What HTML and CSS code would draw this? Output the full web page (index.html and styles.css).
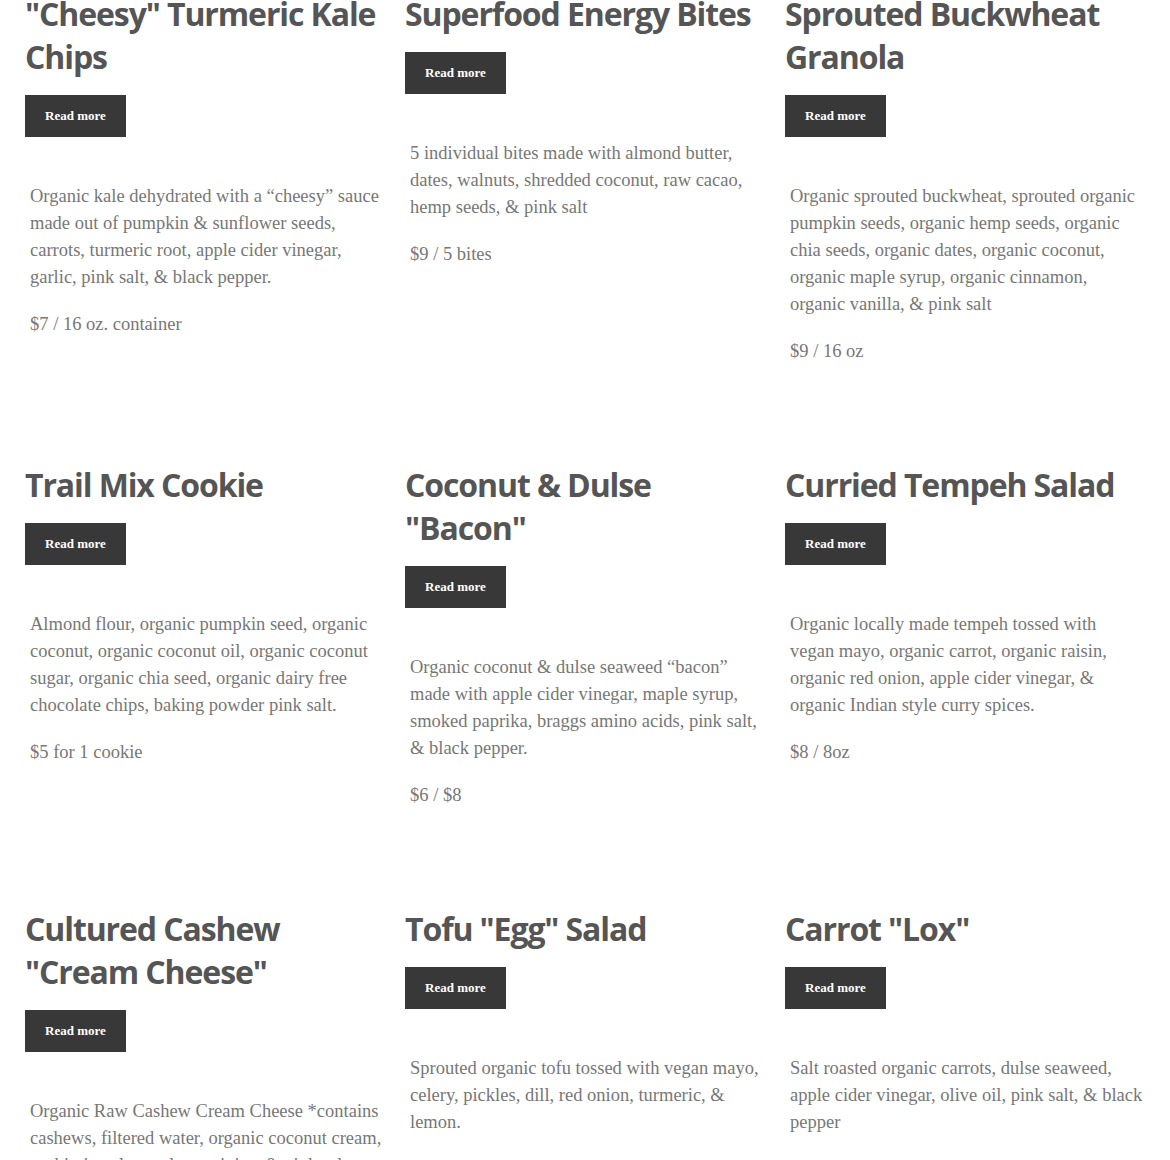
FILE: index.html
```html
<!DOCTYPE html>
<html>
<head>
<meta charset="utf-8">
<link rel="stylesheet" href="styles.css">
</head>
<body>
<div class="menu">
  <article class="item">
    <h2 class="title">"Cheesy" Turmeric Kale Chips</h2>
    <a class="btn">Read more</a>
    <div class="desc">
      <p>Organic kale dehydrated with a “cheesy” sauce made out of pumpkin &amp; sunflower seeds, carrots, turmeric root, apple cider vinegar, garlic, pink salt, &amp; black pepper.</p>
      <p>$7 / 16 oz. container</p>
    </div>
  </article>
  <article class="item">
    <h2 class="title">Superfood Energy Bites</h2>
    <a class="btn">Read more</a>
    <div class="desc">
      <p>5 individual bites made with almond butter, dates, walnuts, shredded coconut, raw cacao, hemp seeds, &amp; pink salt</p>
      <p>$9 / 5 bites</p>
    </div>
  </article>
  <article class="item">
    <h2 class="title">Sprouted Buckwheat Granola</h2>
    <a class="btn">Read more</a>
    <div class="desc">
      <p>Organic sprouted buckwheat, sprouted organic pumpkin seeds, organic hemp seeds, organic chia seeds, organic dates, organic coconut, organic maple syrup, organic cinnamon, organic vanilla, &amp; pink salt</p>
      <p>$9 / 16 oz</p>
    </div>
  </article>
  <article class="item">
    <h2 class="title">Trail Mix Cookie</h2>
    <a class="btn">Read more</a>
    <div class="desc">
      <p>Almond flour, organic pumpkin seed, organic coconut, organic coconut oil, organic coconut sugar, organic chia seed, organic dairy free chocolate chips, baking powder pink salt.</p>
      <p>$5 for 1 cookie</p>
    </div>
  </article>
  <article class="item">
    <h2 class="title">Coconut &amp; Dulse "Bacon"</h2>
    <a class="btn">Read more</a>
    <div class="desc">
      <p>Organic coconut &amp; dulse seaweed “bacon” made with apple cider vinegar, maple syrup, smoked paprika, braggs amino acids, pink salt, &amp; black pepper.</p>
      <p>$6 / $8</p>
    </div>
  </article>
  <article class="item">
    <h2 class="title">Curried Tempeh Salad</h2>
    <a class="btn">Read more</a>
    <div class="desc">
      <p>Organic locally made tempeh tossed with vegan mayo, organic carrot, organic raisin, organic red onion, apple cider vinegar, &amp; organic Indian style curry spices.</p>
      <p>$8 / 8oz</p>
    </div>
  </article>
  <article class="item">
    <h2 class="title">Cultured Cashew "Cream Cheese"</h2>
    <a class="btn">Read more</a>
    <div class="desc">
      <p>Organic Raw Cashew Cream Cheese *contains cashews, filtered water, organic coconut cream, probiotic cultures, lemon juice, &amp; pink salt.</p>
      <p>$8 / 8 oz</p>
    </div>
  </article>
  <article class="item">
    <h2 class="title">Tofu "Egg" Salad</h2>
    <a class="btn">Read more</a>
    <div class="desc">
      <p>Sprouted organic tofu tossed with vegan mayo, celery, pickles, dill, red onion, turmeric, &amp; lemon.</p>
      <p>$8 / 8 oz</p>
    </div>
  </article>
  <article class="item">
    <h2 class="title">Carrot "Lox"</h2>
    <a class="btn">Read more</a>
    <div class="desc">
      <p>Salt roasted organic carrots, dulse seaweed, apple cider vinegar, olive oil, pink salt, &amp; black pepper</p>
      <p>$10 / 4 oz</p>
    </div>
  </article>
</div>
</body>
</html>
```
FILE: styles.css
```css
html, body {
  margin: 0;
  padding: 0;
  background: #fff;
}
.menu {
  display: grid;
  grid-template-columns: repeat(3, 360px);
  column-gap: 20px;
  row-gap: 98px;
  margin: -8px 0 0 25px;
  align-items: start;
}
.item {
  display: flex;
  flex-direction: column;
  align-items: flex-start;
}
.title {
  margin: 0 0 17px;
  font-family: "Open Sans", sans-serif;
  font-weight: 700;
  font-size: 32px;
  line-height: 43px;
  color: #555555;
  letter-spacing: -1.1px;
}
.btn {
  display: block;
  width: 101px;
  height: 42px;
  line-height: 42px;
  text-align: center;
  background: #383838;
  color: #fff;
  font-family: "Liberation Serif", serif;
  font-weight: bold;
  font-size: 13px;
}
.desc {
  margin-top: 46px;
  padding: 0 0 0 5px;
  font-family: "Liberation Serif", serif;
  font-size: 18.5px;
  line-height: 27px;
  color: #777777;
}
.desc p {
  margin: 0 0 20px;
}
.desc p:last-child {
  margin-bottom: 0;
}
```
